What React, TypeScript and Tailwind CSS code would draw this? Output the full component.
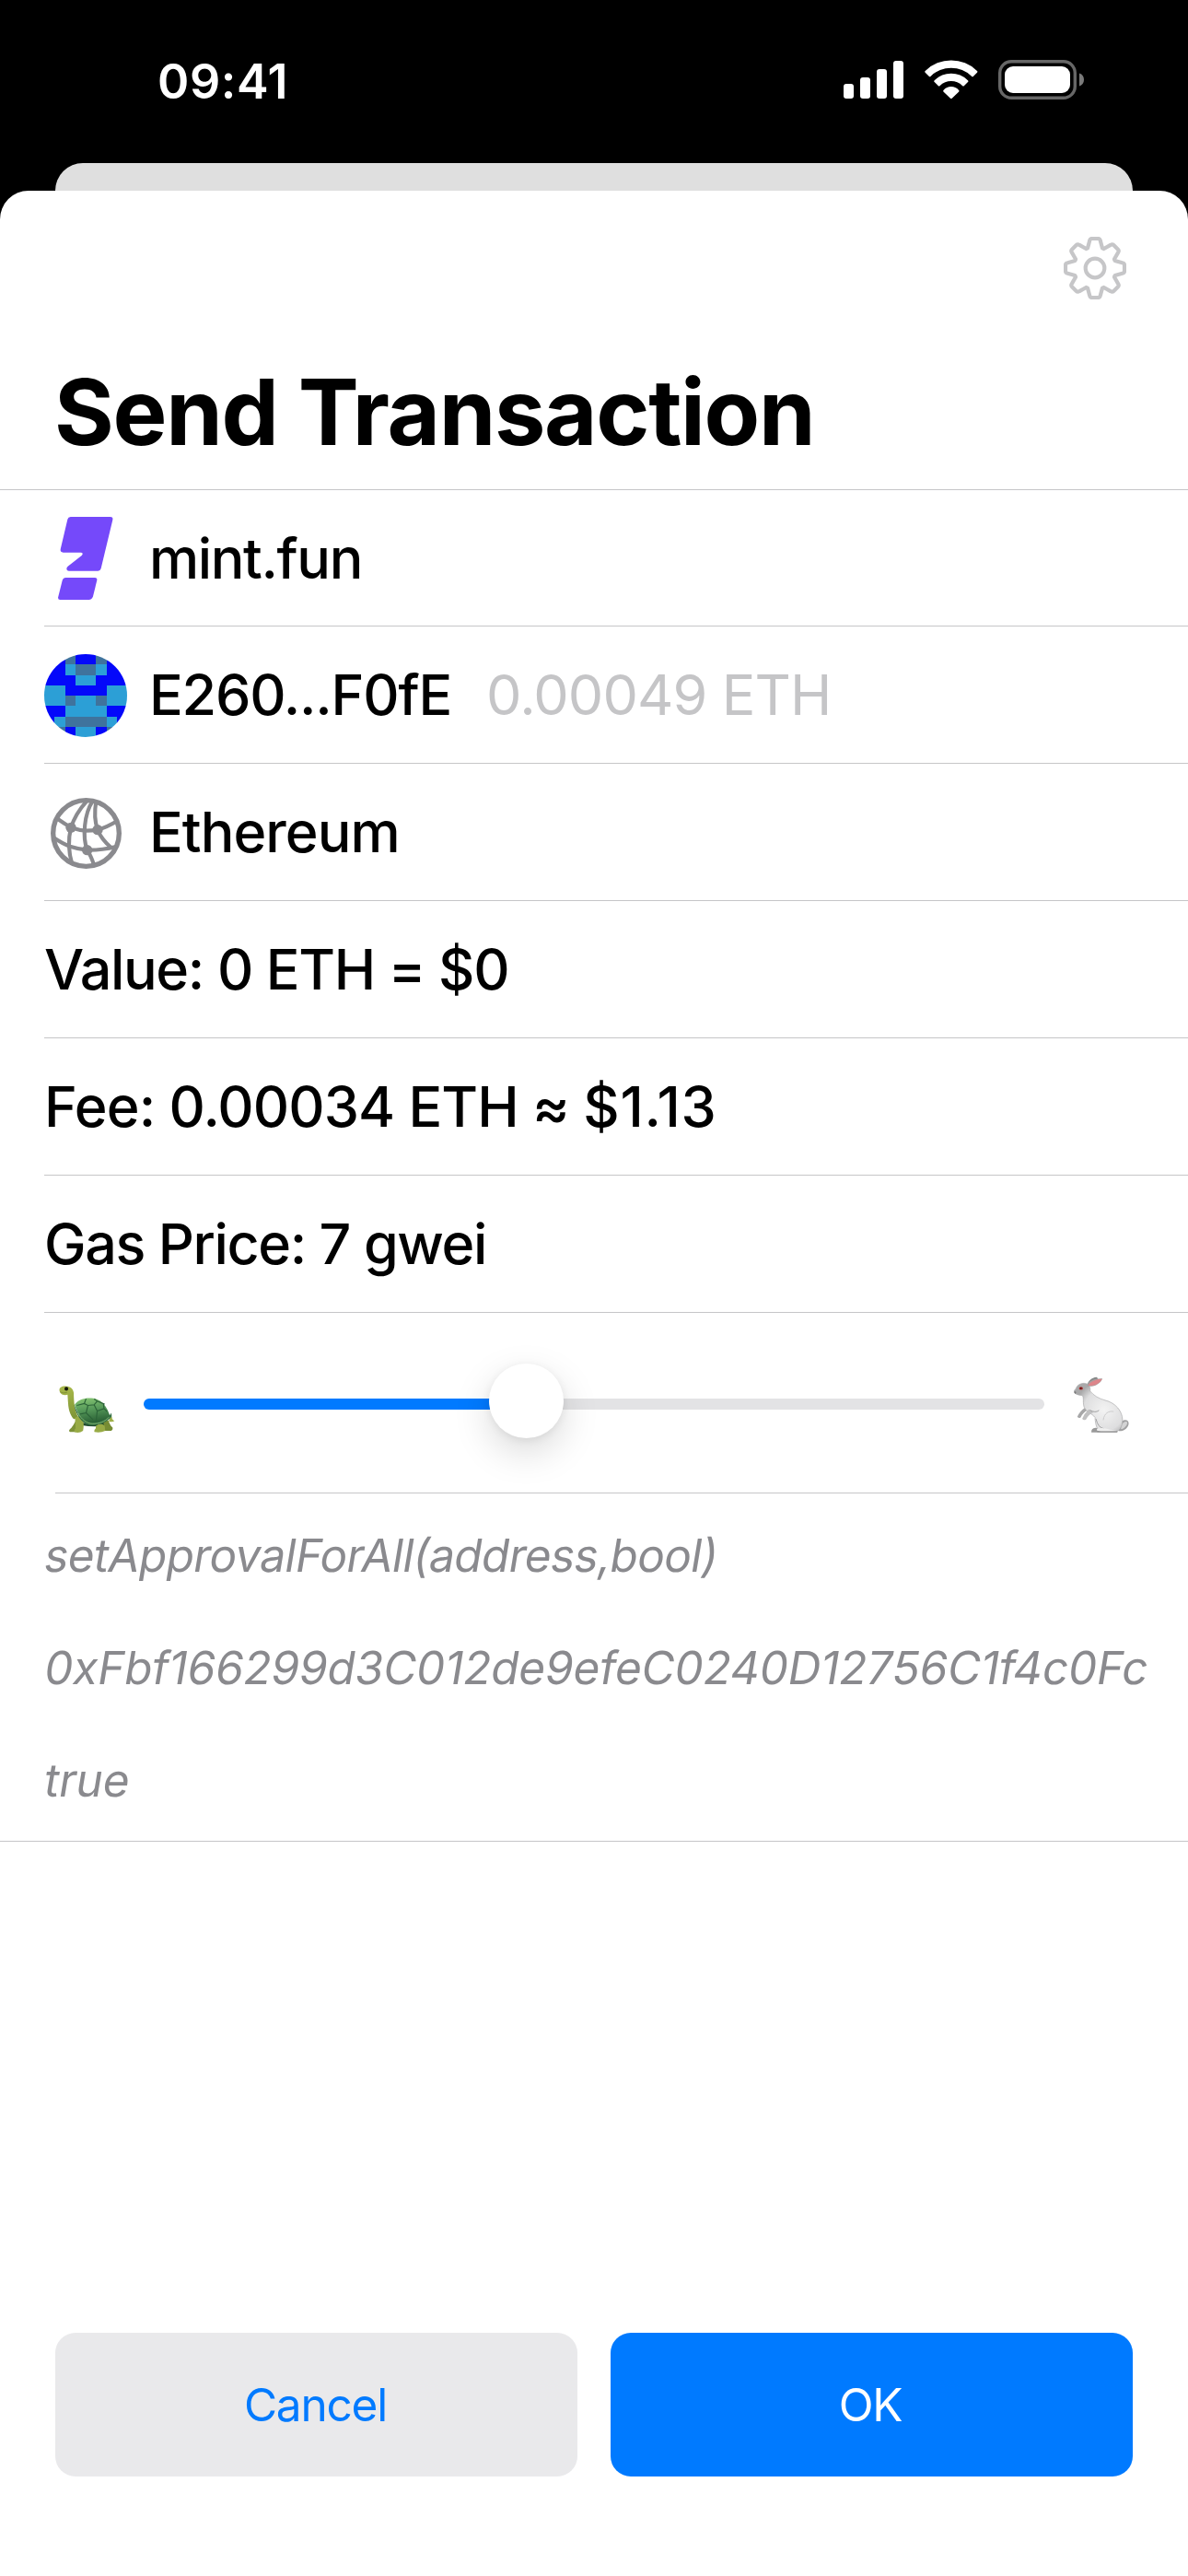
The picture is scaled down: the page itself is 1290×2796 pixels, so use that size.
import type { ReactNode } from 'react';

function SignalBars() {
  return (
    <div className="flex h-[41px] items-end gap-[7px]">
      <div className="h-4 w-[11px] rounded-[3px] bg-white" />
      <div className="h-[23px] w-[11px] rounded-[3px] bg-white" />
      <div className="h-8 w-[11px] rounded-[3px] bg-white" />
      <div className="h-[41px] w-[11px] rounded-[3px] bg-white" />
    </div>
  );
}

function WifiIcon() {
  return (
    <svg className="ml-[23px] h-[42px] w-[58px]" viewBox="371 105 174 126" fill="#fff">
      <path d="M374 140A120 120 0 0 1 541 140Q545 143 542 146L530 158Q527 161 524 158A95.4 95.4 0 0 0 391 158Q388 161 385 158L373 146Q370 143 374 140Z" />
      <path d="M404 171A76 76 0 0 1 511 171Q515 174 512 177L500 189Q497 192 494 189A52 52 0 0 0 421 189Q418 192 415 189L403 177Q400 174 404 171Z" />
      <path d="M433 203A33 33 0 0 1 482 203Q485 206 482 209L460 230Q457.500 232 455 230L433 209Q430 206 433 203Z" />
    </svg>
  );
}

function BatteryIcon() {
  return (
    <svg className="ml-[22px] h-[43px] w-[93px]" viewBox="0 0 93 43">
      <rect x="1.700" y="1.700" width="81.600" height="39.600" rx="12.500" fill="none" stroke="#676767" strokeWidth="3.400" />
      <rect x="7" y="7" width="71" height="29" rx="9" fill="#fff" />
      <path d="M88 14.500C91 15.500 93 18 93 21.500S91 27.500 88 28.500Z" fill="#7a7a7a" />
    </svg>
  );
}

const toothPoints = [
  [-24, -65], [-17.5, -89], [-16, -96], [-10, -96], [10, -96], [16, -96], [17.5, -89], [24, -65],
];

function gearPath() {
  let d = '';
  for (let i = 0; i < 8; i++) {
    const a = (i * Math.PI) / 4;
    const p = toothPoints.map(([x, y]) =>
      `${(x * Math.cos(a) - y * Math.sin(a)).toFixed(1)} ${(x * Math.sin(a) + y * Math.cos(a)).toFixed(1)}`);
    d += `${i === 0 ? 'M' : 'L'}${p[0]}L${p[1]}Q${p[2]} ${p[3]}L${p[4]}Q${p[5]} ${p[6]}L${p[7]}`;
  }
  return d + 'Z';
}

function GearIcon() {
  return (
    <svg className="size-[68px]" viewBox="-102 -102 204 204" fill="none" stroke="#c6c6c8" strokeWidth="12.500" strokeLinejoin="round">
      <path d={gearPath()} />
      <circle r="31" />
    </svg>
  );
}

function MintLogo() {
  return (
    <svg className="h-[90px] w-[60px]" viewBox="190 543 180 270" fill="#7549fa">
      <path d="M231 543H360Q370 543 368 553L330 711Q328 719 320 719H226Q218 719 218 711Q218 708 222 704L267 669Q271 665 270 662Q269 659 264 659H207Q197 659 198 649L221 551Q223 543 231 543Z" />
      <path d="M215 741H310Q318 741 317 749L304 802Q301 813 290 813H197Q190 813 190 806L204 750Q207 741 215 741Z" />
    </svg>
  );
}

const avatarRows = ['BBSBBSBB', 'BBLSSLBB', 'BBBLLBBB', 'LLBBBBLL', 'LLSLLSLL', 'BBLLLLBB', 'BLSSSSLB', 'BSBLLBSB'];
const avatarColors: Record<string, string> = { B: '#0408fa', L: '#2c9fd6', S: '#3f739d' };

function Avatar() {
  return (
    <svg className="size-[90px] rounded-full" viewBox="0 0 8 8" shapeRendering="crispEdges">
      {avatarRows.flatMap((row, y) =>
        row.split('').map((c, x) => <rect key={`${x}-${y}`} x={x} y={y} width="1" height="1" fill={avatarColors[c]} />),
      )}
    </svg>
  );
}

function GlobeIcon() {
  return (
    <svg className="mt-[3px] size-[77px]" viewBox="165 558 231 231" fill="none" stroke="#8a8a8e" strokeWidth="12.500">
      <circle cx="280.500" cy="673.500" r="107.500" strokeWidth="16" />
      <path d="M184 624Q210 642 231 655Q258 664 280 665Q300 665 318 662Q348 654 382 633" />
      <path d="M174 687Q205 708 228 716Q256 725 284 728Q330 729 378 717" />
      <path d="M283 568C256 598 239 630 231 655C222 692 223 735 235 774" />
      <path d="M302 568C274 610 268 685 284 728Q296 746 306 776" />
      <path d="M313 570C306 610 312 645 318 662Q330 692 362 720" />
      <g fill="#8a8a8e" stroke="none">
        <circle cx="231" cy="655" r="17" />
        <circle cx="318" cy="662" r="17" />
        <circle cx="284" cy="728" r="17" />
      </g>
    </svg>
  );
}

function Turtle() {
  return (
    <svg className="h-[51px] w-[61px]" viewBox="24 24 182 152">
      <defs>
        <linearGradient id="skin" x1="0" y1="0" x2="0" y2="1">
          <stop offset="0" stopColor="#a9b84a" />
          <stop offset="1" stopColor="#7d9436" />
        </linearGradient>
        <linearGradient id="shell" x1="0" y1="0" x2="0.200" y2="1">
          <stop offset="0" stopColor="#8ac975" />
          <stop offset="0.500" stopColor="#559859" />
          <stop offset="1" stopColor="#2a6035" />
        </linearGradient>
      </defs>
      <path d="M188 122L196 126Q195 134 204 138Q198 142 186 140Z" fill="#9fb04a" />
      <path d="M96 140Q135 162 182 136L180 152Q140 160 98 152Z" fill="#1f4a2c" />
      <path d="M82 130Q68 160 60 164Q54 170 60 174H80L86 140Z" fill="#7d9238" />
      <path d="M168 142L184 136Q190 154 198 160Q200 166 194 170H172Z" fill="#768c33" />
      <path d="M48 26C30 24 22 34 27 44C30 54 44 56 52 53C54 80 52 110 72 132L88 128C74 104 72 74 72 48C70 32 60 26 48 26Z" fill="url(#skin)" />
      <path d="M76 128Q90 118 102 130Q106 150 102 170Q90 179 74 174Q72 168 78 162Z" fill="#98ab45" />
      <path d="M144 154Q160 142 172 154L174 170Q158 178 139 174Q137 167 143 163Z" fill="#98ab45" />
      <path d="M75 86C86 68 110 62 135 65C162 68 180 92 190 124C176 142 150 150 124 148C104 142 84 116 75 86Z" fill="url(#shell)" />
      <path d="M73 84C84 118 106 142 128 144C154 144 176 136 190 118L194 112L195 124C178 144 152 154 122 152C98 144 78 118 73 84Z" fill="#347044" />
      <g fill="none" stroke="#2c6338" strokeWidth="3.500">
        <path d="M82 88L106 82L118 88L138 86L148 74M106 82L112 66M138 67L148 74L172 84M118 88L112 112L92 116M112 112L134 134M138 86L148 106L170 98L180 108M148 106L144 142M170 98L168 82" />
      </g>
      <path d="M84 112C98 134 114 146 132 147C154 148 174 140 186 126" fill="none" stroke="#8bbd73" strokeWidth="2.500" />
      <circle cx="48" cy="34" r="6" fill="#15180c" />
      <path d="M27 44Q38 50 50 46" fill="none" stroke="#74822f" strokeWidth="2" />
    </svg>
  );
}

function Rabbit() {
  return (
    <svg className="h-[61px] w-[60px]" viewBox="498 160 180 184">
      <defs>
        <radialGradient id="fur" cx="0.620" cy="0.550" r="0.600">
          <stop offset="0" stopColor="#f3f3f3" />
          <stop offset="0.700" stopColor="#dededf" />
          <stop offset="1" stopColor="#a9a9aa" />
        </radialGradient>
      </defs>
      <path d="M541 190C543 174 556 164 572 162L577 167L562 180Z" fill="#858888" />
      <path d="M645 318C656 301 667 300 675 306C683 318 668 340 645 339Z" fill="#a0a0a1" />
      <path d="M652 322C659 309 667 306 672 309C675 317 664 330 652 333Z" fill="#d3d3d4" />
      <path d="M535 262Q517 274 509 292Q514 298 520 294Q526 280 542 271Z" fill="#a7a7a8" />
      <path d="M555 343Q554 329 568 328L640 338V343Z" fill="#999" />
      <path d="M501 214C495 210 500 205 505 199C508 187 524 180 536 183C548 184 552 196 551 208C562 222 580 233 600 238C634 246 657 274 657 302C657 326 646 342 630 342H586C575 338 568 320 567 294C558 282 540 278 531 260C526 240 532 231 525 222C516 221 506 220 501 214Z" fill="url(#fur)" stroke="#a9a9aa" strokeWidth="2" />
      <path d="M546 268Q531 282 525 299Q531 306 538 300Q546 285 562 278Z" fill="#c0c0c1" />
      <path d="M540 192C545 175 563 166 591 167C586 184 564 196 540 192Z" fill="#a5a0a0" />
      <path d="M544 190C552 175 570 169 590 168C583 182 564 193 544 190Z" fill="#dd858a" />
      <path d="M594 303C597 280 612 272 628 275" fill="none" stroke="#cbcbcc" strokeWidth="3" />
      <path d="M570 299Q577 328 596 331M550 270Q568 281 580 271" fill="none" stroke="#a0a0a1" strokeWidth="3" />
      <path d="M574 331Q594 326 616 334L638 338H577Q570 337 574 331Z" fill="#efefef" />
      <path d="M574 341H640" stroke="#929292" strokeWidth="3" />
      <ellipse cx="521" cy="199" rx="6.500" ry="5" fill="#a93030" />
      <circle cx="521" cy="199" r="2.500" fill="#4b1010" />
      <path d="M499 210Q504 207 505 213L503 217Q498 215 499 210Z" fill="#777" />
    </svg>
  );
}

function Row({ children, className = '' }: { children: ReactNode; className?: string }) {
  return (
    <div className={`ml-12 flex h-[149px] items-center border-b border-[#c6c6c8] text-[61px] leading-[92px] font-medium whitespace-pre ${className}`}>
      {children}
    </div>
  );
}

export default function App() {
  return (
    <div className="flex h-[2796px] w-[1290px] flex-col bg-black font-['Inter',sans-serif] text-black">
      <header className="flex h-[177px] shrink-0 justify-between pr-[113px] pl-[171px]">
        <time className="mt-[57px] text-[52px] leading-[63px] font-semibold tracking-[0.6px] text-white">09:41</time>
        <div className="mt-[65px] flex h-[43px] items-start">
          <div className="pt-px"><SignalBars /></div>
          <WifiIcon />
          <BatteryIcon />
        </div>
      </header>
      <div className="mx-[60px] h-[30px] shrink-0 rounded-t-[30px] bg-[#dfdfdf]" />
      <main className="flex grow flex-col rounded-t-[31px] bg-white">
        <div className="flex h-[180px] justify-end pt-[50px] pr-[67px]">
          <button aria-label="Settings" className="size-[68px]"><GearIcon /></button>
        </div>
        <h1 className="h-[145px] border-b border-[#c6c6c8] pl-[59px] text-[99px] leading-[120px] font-bold tracking-[-1.32px]">
          Send Transaction
        </h1>

        <Row className="!h-[148px]">
          <div className="flex w-[114px] pl-[15px]"><MintLogo /></div>
          <span className="tracking-[-1.38px]">mint.fun</span>
        </Row>
        <Row>
          <div className="w-[114px] pt-[2px]"><Avatar /></div>
          <span className="tracking-[-1.2px]">E260...F0fE</span>
          <span className="ml-[38px] font-normal tracking-[-0.9px] text-[#c5c5c7]">0.00049 ETH</span>
        </Row>
        <Row>
          <div className="w-[114px] pl-[7px]"><GlobeIcon /></div>
          <span className="tracking-[-0.95px]">Ethereum</span>
        </Row>
        <Row className="tracking-[-1.34px]">Value: 0 ETH = $0</Row>
        <Row>
          <span className="tracking-[-0.92px]">{'Fee: 0.00034 ETH ≈ '}</span>
          <span className="tracking-[0.8px]">$1.13</span>
        </Row>
        <Row className="tracking-[-1.4px]">Gas Price: 7 gwei</Row>

        <div className="ml-[60px] flex h-[196px] items-end border-b border-[#c6c6c8] pb-[65px] pl-1">
          <Turtle />
          <div className="relative mb-[25px] ml-[31px] h-3 w-[978px] rounded-full bg-[#e3e3e5]">
            <div className="h-3 w-[415px] rounded-l-full bg-[#007aff]" />
            <div className="absolute -top-[38px] left-[375px] size-[81px] rounded-full bg-white shadow-[0_15px_40px_rgba(0,0,0,0.15),0_2px_10px_rgba(0,0,0,0.07)]" />
          </div>
          <div className="ml-8"><Rabbit /></div>
        </div>

        <div className="h-[378px] border-b border-[#c6c6c8] pt-1.5 pl-[46px] text-[49.5px] leading-[122px] whitespace-nowrap text-[#8a8a8e]">
          <p className="h-[122px] origin-[0_79px] -skew-x-[9.4deg] tracking-[-0.65px]">setApprovalForAll(address,bool)</p>
          <p className="h-[122px] origin-[0_79px] -skew-x-[9.4deg] tracking-[-0.17px]">0xFbf166299d3C012de9efeC0240D12756C1f4c0Fc</p>
          <p className="h-[121px] origin-[0_79px] -skew-x-[9.4deg] tracking-[-0.23px]">true</p>
        </div>

        <div className="mt-auto mb-[108px] grid grid-cols-2 gap-9 px-[60px] text-[49.5px]">
          <button className="h-[156px] rounded-[22px] bg-[#e9e9eb] pr-[2px] tracking-[-1.19px] text-[#007aff]">Cancel</button>
          <button className="h-[156px] rounded-[22px] bg-[#007aff] pr-[3px] tracking-[-1.25px] text-white">OK</button>
        </div>
      </main>
    </div>
  );
}
